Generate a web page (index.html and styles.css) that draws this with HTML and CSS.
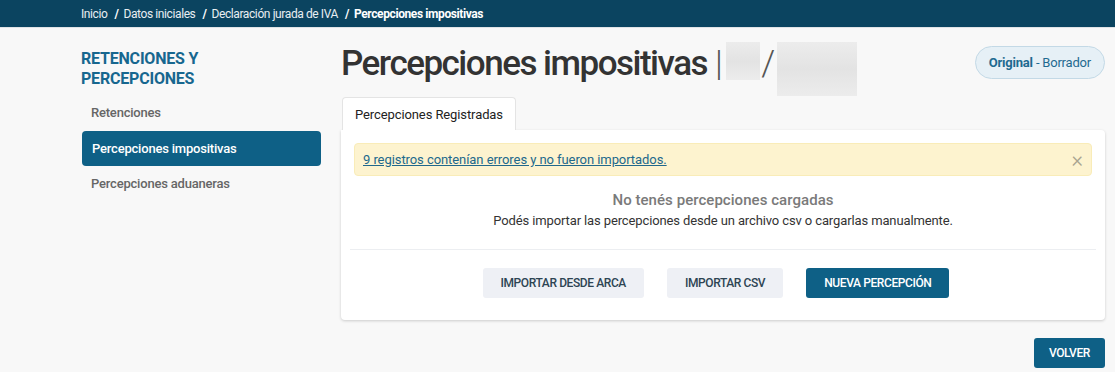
FILE: index.html
```html
<!DOCTYPE html>
<html lang="es">
<head>
    <meta charset="UTF-8">
    <meta name="viewport" content="width=device-width, initial-scale=1.0">
    <title>Percepciones impositivas</title>
    <link rel="stylesheet" href="styles.css">
</head>
<body>

    <nav class="topbar">
        <a href="#">Inicio</a>
        <span class="sep">/</span>
        <a href="#">Datos iniciales</a>
        <span class="sep">/</span>
        <a href="#">Declaración jurada de IVA</a>
        <span class="sep">/</span>
        <strong>Percepciones impositivas</strong>
    </nav>

    <div class="layout">
        <aside class="sidebar">
            <h2>RETENCIONES Y PERCEPCIONES</h2>
            <ul class="side-menu">
                <li><a href="#">Retenciones</a></li>
                <li><a href="#" class="active">Percepciones impositivas</a></li>
                <li><a href="#">Percepciones aduaneras</a></li>
            </ul>
        </aside>

        <main class="content">
            <div class="page-head">
                <h1>Percepciones impositivas <span class="bar">|</span> <span class="blur blur-a"></span> <span class="slash">/</span><span class="blur blur-b"></span></h1>
                <span class="badge"><b>Original</b> - Borrador</span>
            </div>

            <div class="tabs">
                <span class="tab">Percepciones Registradas</span>
            </div>

            <div class="card">
                <div class="alert">
                    <a href="#">9 registros contenían errores y no fueron importados.</a>
                    <span class="close">&times;</span>
                </div>

                <p class="empty-title">No tenés percepciones cargadas</p>
                <p class="empty-text">Podés importar las percepciones desde un archivo csv o cargarlas manualmente.</p>

                <hr>

                <div class="actions">
                    <button class="btn btn-light">IMPORTAR DESDE ARCA</button>
                    <button class="btn btn-light">IMPORTAR CSV</button>
                    <button class="btn btn-primary">NUEVA PERCEPCIÓN</button>
                </div>
            </div>

            <div class="footer-actions">
                <button class="btn btn-primary">VOLVER</button>
            </div>
        </main>
    </div>

</body>
</html>
```

FILE: styles.css
```css
body {
    font-family: Roboto, 'Liberation Sans', Arial, sans-serif;
    margin: 0;
    padding: 0;
    background-color: #f8f8f8;
    color: #333;
}

.topbar {
    background-color: #0b4460;
    color: #fff;
    height: 27px;
    padding: 0 0 0 81px;
    display: flex;
    align-items: center;
    font-size: 12px;
    letter-spacing: -0.4px;
    border-bottom: 1px solid #dfe3e6;
}

.topbar a {
    color: #e8eef2;
    text-decoration: none;
}

.topbar .sep {
    margin: 0 5px 0 7px;
    font-weight: bold;
}

.topbar strong {
    font-weight: 700;
}

.layout {
    display: flex;
    padding: 0 10px 0 81px;
    gap: 20px;
}

.sidebar {
    width: 240px;
    flex-shrink: 0;
    padding-top: 21px;
}

.sidebar h2 {
    color: #17678f;
    font-size: 16px;
    line-height: 20px;
    font-weight: 700;
    margin: 0 0 6px 0;
    max-width: 150px;
    letter-spacing: -0.2px;
}

.side-menu {
    list-style: none;
    margin: 0;
    padding: 0;
}

.side-menu a {
    display: block;
    padding: 0 10px;
    height: 36px;
    line-height: 36px;
    font-size: 13px;
    font-weight: 500;
    color: #666;
    text-decoration: none;
    border-radius: 4px;
    letter-spacing: -0.2px;
}

.side-menu a.active {
    background-color: #0e6086;
    color: #fff;
    height: 35px;
    line-height: 35px;
    margin-left: 1px;
}

.content {
    flex: 1;
    padding-top: 14px;
}

.page-head {
    display: flex;
    justify-content: space-between;
    align-items: flex-start;
    height: 55px;
}

.page-head h1 {
    margin: 0;
    font-size: 35px;
    font-weight: 500;
    color: #333;
    letter-spacing: -1.5px;
    line-height: 44px;
    display: flex;
    align-items: flex-start;
}

.page-head .bar {
    font-weight: 300;
    color: #555;
    margin: 0 5px 0 8px;
}

.page-head .slash {
    font-weight: 300;
    color: #555;
    margin: 0 3px 0 1px;
}

.blur {
    display: inline-block;
    background: linear-gradient(#ececec, #e3e3e3 50%, #ececec);
}

.blur-a {
    width: 34px;
    height: 38px;
}

.blur-b {
    width: 80px;
    height: 54px;
}

.badge {
    margin-top: 4px;
    padding: 0 13px;
    height: 31px;
    line-height: 31px;
    border: 1px solid #c3d9e6;
    background-color: #e6f0f6;
    border-radius: 17px;
    color: #1e6a90;
    font-size: 13px;
    letter-spacing: -0.2px;
}

.badge b {
    font-weight: 700;
}

.tabs {
    display: flex;
    margin-left: 1px;
}

.tab {
    background-color: #fff;
    border: 1px solid #e4e4e4;
    border-bottom: none;
    border-radius: 4px 4px 0 0;
    padding: 0 12px;
    height: 32px;
    line-height: 34px;
    font-size: 13px;
    color: #222;
    letter-spacing: -0.1px;
}

.card {
    background-color: #fff;
    border-radius: 0 4px 4px 4px;
    box-shadow: 0 1px 3px rgba(0, 0, 0, 0.18);
    padding: 13px 13px 22px 13px;
}

.alert {
    display: flex;
    justify-content: space-between;
    align-items: center;
    background-color: #fdf3cf;
    border: 1px solid #f9ecb8;
    border-radius: 4px;
    height: 31px;
    padding: 0 8px;
}

.alert a {
    color: #21688c;
    font-size: 13px;
    letter-spacing: -0.07px;
}

.alert .close {
    color: #a9a48f;
    font-size: 22px;
    font-weight: 300;
    line-height: 1;
}

.empty-title {
    margin: 14px 0 0 0;
    text-align: center;
    font-size: 15px;
    font-weight: 500;
    color: #7a7a7a;
    letter-spacing: 0.05px;
    line-height: 20px;
}

.empty-text {
    margin: 2px 0 0 0;
    text-align: center;
    font-size: 13px;
    color: #333;
    letter-spacing: -0.12px;
    line-height: 18px;
}

hr {
    border: none;
    border-top: 1px solid #eceef1;
    margin: 19px -4px 18px -4px;
}

.actions {
    display: flex;
    justify-content: center;
    gap: 23px;
    padding-right: 14px;
}

.btn {
    font-family: Roboto, 'Liberation Sans', Arial, sans-serif;
    font-size: 12px;
    font-weight: 500;
    height: 30px;
    padding: 0 18px;
    border: none;
    border-radius: 3px;
    cursor: pointer;
    letter-spacing: -0.4px;
}

.btn-light {
    background-color: #eef0f5;
    color: #2d4453;
}

.btn-primary {
    background-color: #0e6086;
    color: #fff;
}

.footer-actions {
    display: flex;
    justify-content: flex-end;
    margin-top: 18px;
}

.footer-actions .btn {
    padding: 0 15px;
}
```
